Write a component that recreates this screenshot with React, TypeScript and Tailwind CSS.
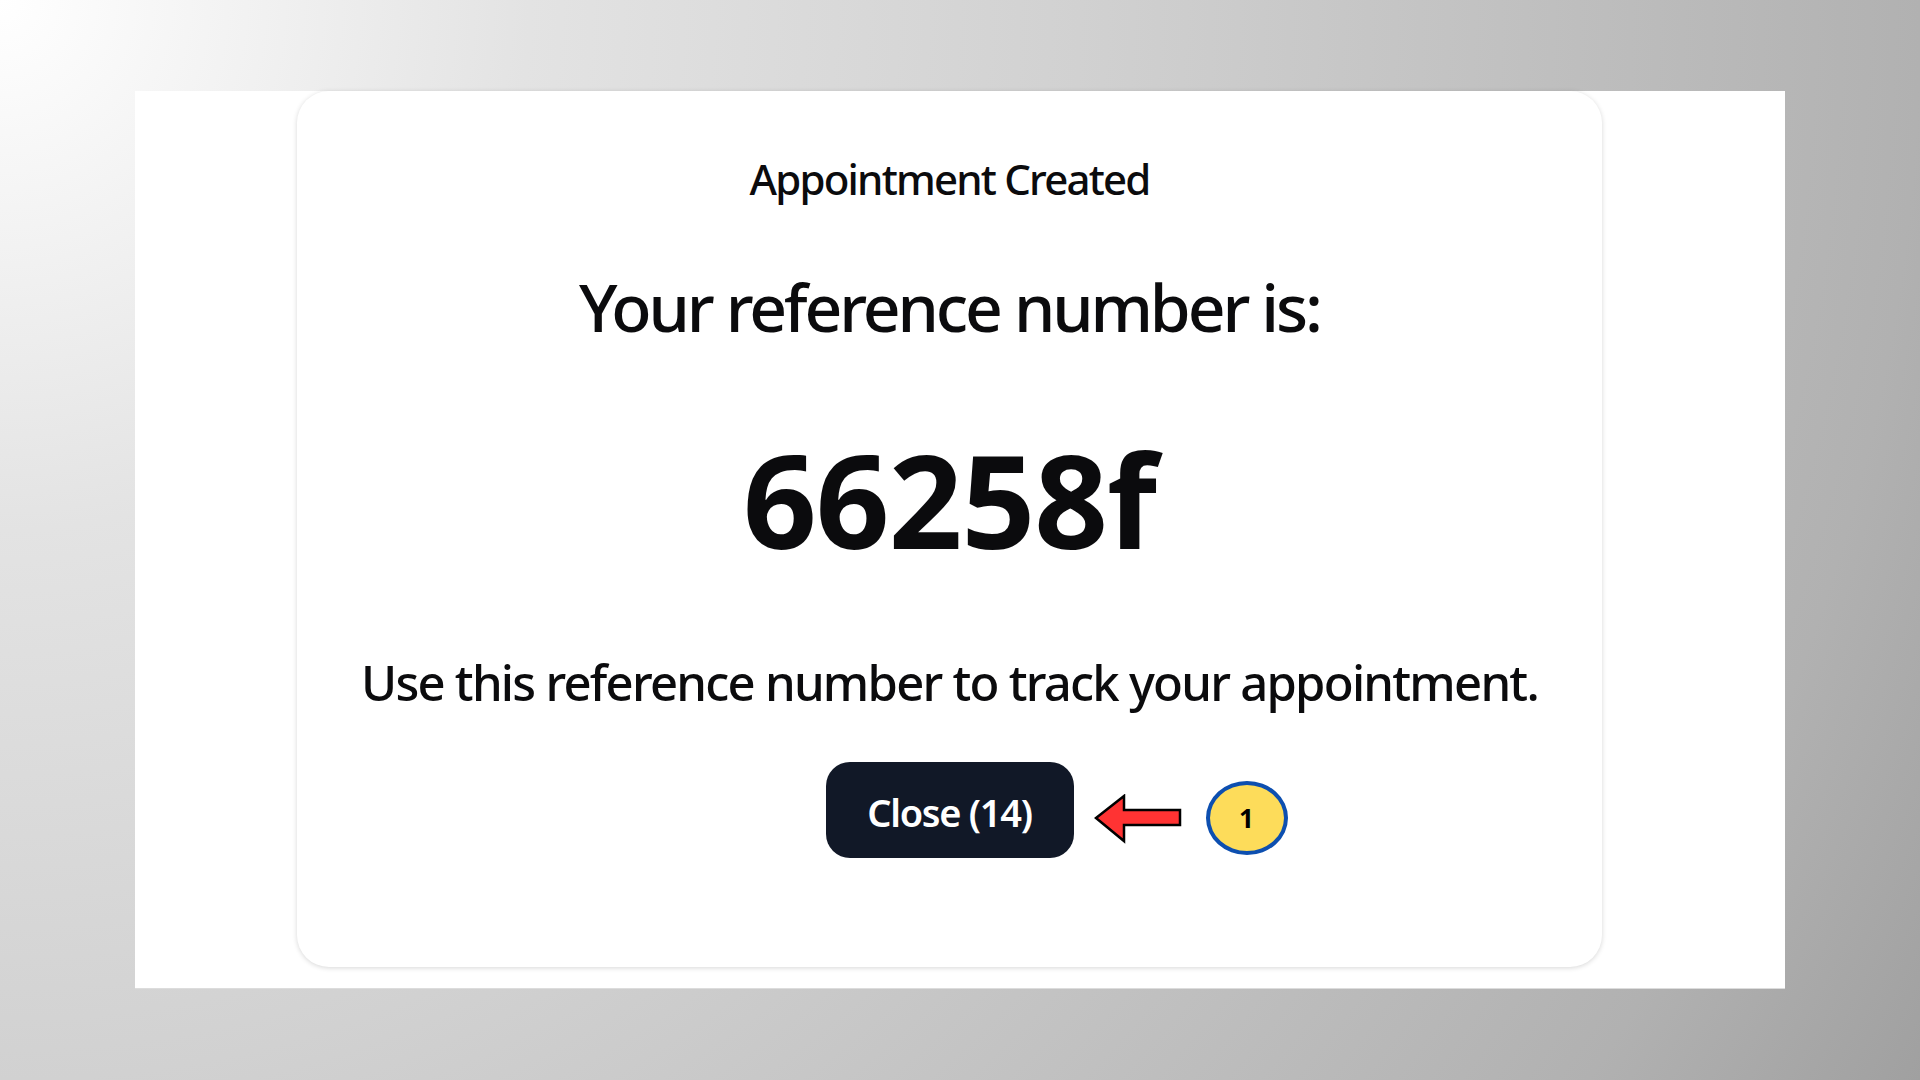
import React from "react";

export default function App() {
  return (
    <div
      className="w-[1920px] h-[1080px] overflow-hidden pt-[91px] pl-[135px] bg-[radial-gradient(circle_at_0_0,#ffffff_0px,#e3e3e3_530px,#d1d1d1_1080px,#b1b1b1_1920px,#a0a0a0_2203px)]"
      style={{ fontFamily: '"Noto Sans", "Open Sans", sans-serif' }}
    >
      <div className="w-[1650px] h-[897px] bg-white pl-[162px] shadow-[0_1px_0_#dcdcdc]">
        <div className="w-[1305px] h-[876px] rounded-[32px] bg-white shadow-[0_1px_5px_rgba(0,0,0,0.16)] flex flex-col items-center pt-[67px] text-[#0b0b0d]">
          <div className="text-[42px] leading-[42px] tracking-[-1.8px] font-medium">
            Appointment Created
          </div>
          <div className="mt-[73px] text-[66px] leading-[66px] tracking-[-3.1px] font-medium">
            Your reference number is:
          </div>
          <div className="mt-[96px] text-[129px] leading-[129px] tracking-[-1px] font-bold">
            66258f
          </div>
          <div className="mt-[94px] text-[49px] leading-[49px] tracking-[-1.75px] font-medium">
            Use this reference number to track your appointment.
          </div>
          <div className="relative mt-[55px]">
            <button className="w-[248px] h-[96px] rounded-[24px] bg-[#111827] text-white text-[38px] leading-none pt-[4px] font-semibold tracking-[-1.3px] flex items-center justify-center">
              Close (14)
            </button>
            <svg
              className="absolute left-[268px] top-[32px]"
              width="90"
              height="50"
              viewBox="0 0 90 50"
            >
              <polygon
                points="2,24 30,2 30,16 86,16 86,31 30,31 30,47"
                fill="#ff3333"
                stroke="#000000"
                strokeWidth="2.5"
                strokeLinejoin="miter"
              />
            </svg>
            <div className="absolute left-[380px] top-[19px] w-[82px] h-[74px] rounded-[50%] bg-[#fddc5a] border-[4px] border-[#0d4fb0] flex items-center justify-center text-[26px] font-bold text-black leading-none">
              1
            </div>
          </div>
        </div>
      </div>
    </div>
  );
}
